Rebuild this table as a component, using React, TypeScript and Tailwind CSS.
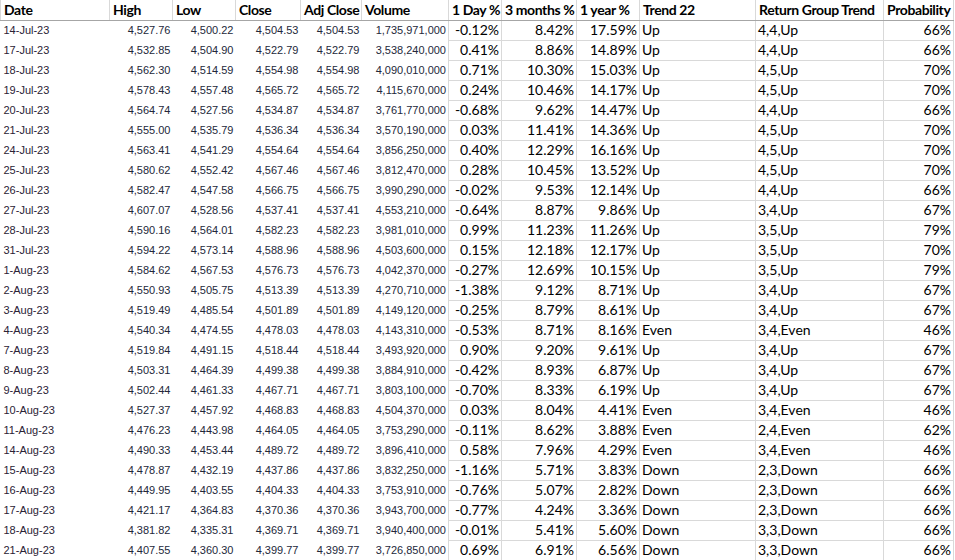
const widths = [109, 63, 63, 65, 61, 87, 53, 75, 63, 116, 128, 70];

const headers = [
  "Date",
  "High",
  "Low",
  "Close",
  "Adj Close",
  "Volume",
  "1 Day %",
  "3 months %",
  "1 year %",
  "Trend 22",
  "Return Group Trend",
  "Probability",
];

const raw = `14-Jul-23|4,527.76|4,500.22|4,504.53|4,504.53|1,735,971,000|-0.12%|8.42%|17.59%|Up|4,4,Up|66%
17-Jul-23|4,532.85|4,504.90|4,522.79|4,522.79|3,538,240,000|0.41%|8.86%|14.89%|Up|4,4,Up|66%
18-Jul-23|4,562.30|4,514.59|4,554.98|4,554.98|4,090,010,000|0.71%|10.30%|15.03%|Up|4,5,Up|70%
19-Jul-23|4,578.43|4,557.48|4,565.72|4,565.72|4,115,670,000|0.24%|10.46%|14.17%|Up|4,5,Up|70%
20-Jul-23|4,564.74|4,527.56|4,534.87|4,534.87|3,761,770,000|-0.68%|9.62%|14.47%|Up|4,4,Up|66%
21-Jul-23|4,555.00|4,535.79|4,536.34|4,536.34|3,570,190,000|0.03%|11.41%|14.36%|Up|4,5,Up|70%
24-Jul-23|4,563.41|4,541.29|4,554.64|4,554.64|3,856,250,000|0.40%|12.29%|16.16%|Up|4,5,Up|70%
25-Jul-23|4,580.62|4,552.42|4,567.46|4,567.46|3,812,470,000|0.28%|10.45%|13.52%|Up|4,5,Up|70%
26-Jul-23|4,582.47|4,547.58|4,566.75|4,566.75|3,990,290,000|-0.02%|9.53%|12.14%|Up|4,4,Up|66%
27-Jul-23|4,607.07|4,528.56|4,537.41|4,537.41|4,553,210,000|-0.64%|8.87%|9.86%|Up|3,4,Up|67%
28-Jul-23|4,590.16|4,564.01|4,582.23|4,582.23|3,981,010,000|0.99%|11.23%|11.26%|Up|3,5,Up|79%
31-Jul-23|4,594.22|4,573.14|4,588.96|4,588.96|4,503,600,000|0.15%|12.18%|12.17%|Up|3,5,Up|70%
1-Aug-23|4,584.62|4,567.53|4,576.73|4,576.73|4,042,370,000|-0.27%|12.69%|10.15%|Up|3,5,Up|79%
2-Aug-23|4,550.93|4,505.75|4,513.39|4,513.39|4,270,710,000|-1.38%|9.12%|8.71%|Up|3,4,Up|67%
3-Aug-23|4,519.49|4,485.54|4,501.89|4,501.89|4,149,120,000|-0.25%|8.79%|8.61%|Up|3,4,Up|67%
4-Aug-23|4,540.34|4,474.55|4,478.03|4,478.03|4,143,310,000|-0.53%|8.71%|8.16%|Even|3,4,Even|46%
7-Aug-23|4,519.84|4,491.15|4,518.44|4,518.44|3,493,920,000|0.90%|9.20%|9.61%|Up|3,4,Up|67%
8-Aug-23|4,503.31|4,464.39|4,499.38|4,499.38|3,884,910,000|-0.42%|8.93%|6.87%|Up|3,4,Up|67%
9-Aug-23|4,502.44|4,461.33|4,467.71|4,467.71|3,803,100,000|-0.70%|8.33%|6.19%|Up|3,4,Up|67%
10-Aug-23|4,527.37|4,457.92|4,468.83|4,468.83|4,504,370,000|0.03%|8.04%|4.41%|Even|3,4,Even|46%
11-Aug-23|4,476.23|4,443.98|4,464.05|4,464.05|3,753,290,000|-0.11%|8.62%|3.88%|Even|2,4,Even|62%
14-Aug-23|4,490.33|4,453.44|4,489.72|4,489.72|3,896,410,000|0.58%|7.96%|4.29%|Even|3,4,Even|46%
15-Aug-23|4,478.87|4,432.19|4,437.86|4,437.86|3,832,250,000|-1.16%|5.71%|3.83%|Down|2,3,Down|66%
16-Aug-23|4,449.95|4,403.55|4,404.33|4,404.33|3,753,910,000|-0.76%|5.07%|2.82%|Down|2,3,Down|66%
17-Aug-23|4,421.17|4,364.83|4,370.36|4,370.36|3,943,700,000|-0.77%|4.24%|3.36%|Down|2,3,Down|66%
18-Aug-23|4,381.82|4,335.31|4,369.71|4,369.71|3,940,400,000|-0.01%|5.41%|5.60%|Down|3,3,Down|66%
21-Aug-23|4,407.55|4,360.30|4,399.77|4,399.77|3,726,850,000|0.69%|6.91%|6.56%|Down|3,3,Down|66%`;

const rows = raw.split("\n").map((line) => line.split("|"));

function DataCell({ value, col }: { value: string; col: number }) {
  // first six columns are pasted Arial cells with white fill, no gridlines
  if (col === 0) {
    return <td className="h-[20px] pl-[3px] text-left text-[11px] font-['Liberation_Sans',Arial,sans-serif] text-[#2a2235]">{value}</td>;
  }
  if (col < 6) {
    return <td className="h-[20px] pr-[2px] text-right text-[11px] font-['Liberation_Sans',Arial,sans-serif] text-[#23283a]">{value}</td>;
  }
  const left = col === 9 || col === 10;
  return (
    <td
      className={`h-[20px] border border-[#d9d9d9] text-[14px] font-['Lato',sans-serif] text-black ${
        left ? "pl-[2px] text-left" : "pr-[2px] text-right"
      }`}
    >
      {value}
    </td>
  );
}

export default function App() {
  return (
    <div className="w-[955px] h-[560px] overflow-hidden bg-white">
      <table className="table-fixed border-collapse w-[954px]">
        <colgroup>
          {widths.map((w, i) => (
            <col key={i} style={{ width: w }} />
          ))}
        </colgroup>
        <thead>
          <tr>
            {headers.map((h) => (
              <th
                key={h}
                className="h-[20px] border-x border-[#d9d9d9] border-b border-b-[#a6a6a6] pl-[3px] text-left text-[14px] tracking-[-0.4px] font-bold font-['Lato',sans-serif] text-black whitespace-nowrap overflow-hidden leading-none"
              >
                {h}
              </th>
            ))}
          </tr>
        </thead>
        <tbody>
          {rows.map((r) => (
            <tr key={r[0]} className="leading-none whitespace-nowrap">
              {r.map((v, i) => (
                <DataCell key={i} value={v} col={i} />
              ))}
            </tr>
          ))}
        </tbody>
      </table>
    </div>
  );
}
